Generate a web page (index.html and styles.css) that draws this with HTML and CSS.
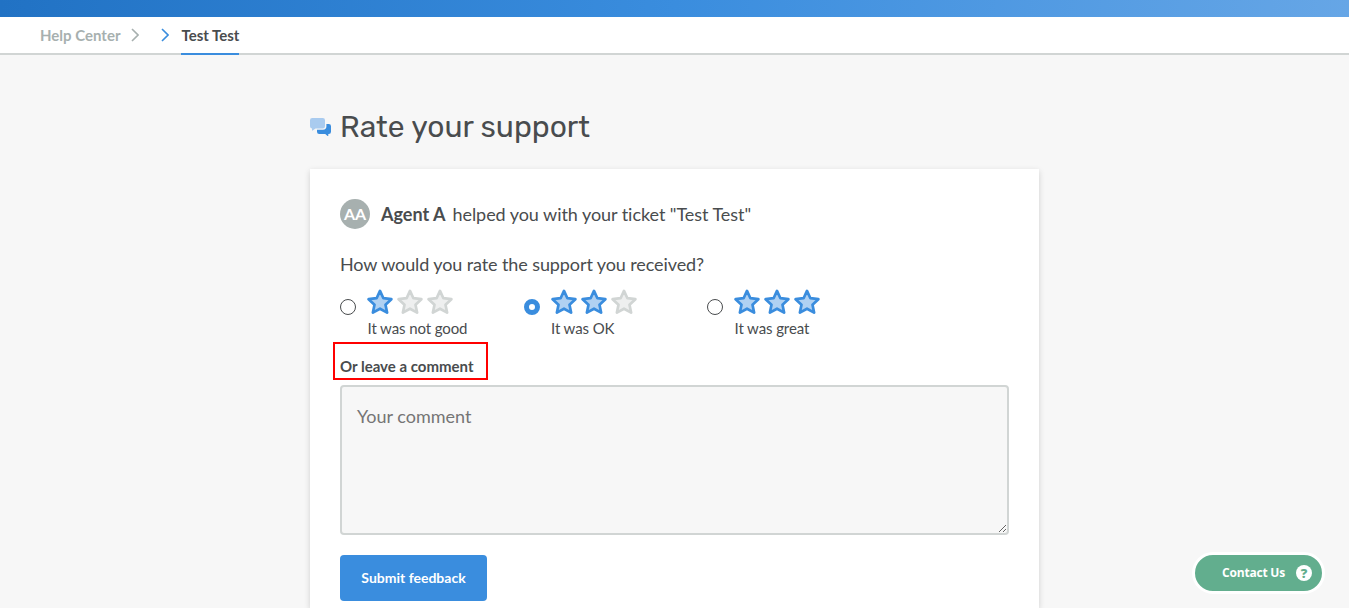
FILE: index.html
```html
<!DOCTYPE html>
<html lang="en">
<head>
<meta charset="utf-8">
<title>Rate your support</title>
<link rel="stylesheet" href="styles.css">
</head>
<body>
<svg class="defs" width="0" height="0" aria-hidden="true">
  <symbol id="star" viewBox="0 0 26 26">
    <path d="M13 1.900l3.400 7.300 8 1-5.900 5.500 1.600 7.900-7.100-3.900-7.100 3.900 1.600-7.900-5.900-5.500 8-1z" stroke-width="2.700" stroke-linejoin="round"/>
  </symbol>
</svg>
<header class="banner"></header>
<nav class="crumbs">
  <a class="crumb">Help Center</a>
  <svg class="chevron" viewBox="0 0 8 14"><path d="M1 1l6 6-6 6"/></svg>
  <svg class="chevron chevron-active" viewBox="0 0 8 14"><path d="M1 1l6 6-6 6"/></svg>
  <a class="crumb crumb-active">Test Test</a>
</nav>
<main class="page">
  <div class="title">
    <svg class="title-icon" viewBox="0 0 21 18">
      <path fill="#a9cbef" d="M2.200 0h10.600q2.200 0 2.200 2.200v6q0 2.200-2.200 2.200H5.500L2.700 12.500q-.7.400-.7-.4v-1.700Q0 10.300 0 8.200v-6Q0 0 2.200 0z"/>
      <path fill="#3a8dde" d="M16.400 6h2.400Q21 6 21 8.200v5.600q0 2.200-2.200 2.200h-.5v1.600q0 .7-.7.300L15.200 16H9.200Q7 16 7 13.800V11.700h6q3.400 0 3.400-3.400z"/>
    </svg>
    <h1>Rate your support</h1>
  </div>
  <section class="card">
    <div class="agent">
      <span class="avatar">AA</span>
      <strong>Agent A</strong>
      <span class="helped">helped you with your ticket "Test Test"</span>
    </div>
    <p class="question">How would you rate the support you received?</p>
    <div class="ratings">
      <label class="rating">
        <span class="radio"></span>
        <span class="choice">
          <span class="stars"><svg class="star on"><use href="#star"/></svg><svg class="star"><use href="#star"/></svg><svg class="star"><use href="#star"/></svg></span>
          <span class="caption">It was not good</span>
        </span>
      </label>
      <label class="rating">
        <span class="radio checked"></span>
        <span class="choice">
          <span class="stars"><svg class="star on"><use href="#star"/></svg><svg class="star on"><use href="#star"/></svg><svg class="star"><use href="#star"/></svg></span>
          <span class="caption">It was OK</span>
        </span>
      </label>
      <label class="rating">
        <span class="radio"></span>
        <span class="choice">
          <span class="stars"><svg class="star on"><use href="#star"/></svg><svg class="star on"><use href="#star"/></svg><svg class="star on"><use href="#star"/></svg></span>
          <span class="caption">It was great</span>
        </span>
      </label>
    </div>
    <div class="comment-label"><label for="comment">Or leave a comment</label></div>
    <textarea id="comment" class="comment" placeholder="Your comment"></textarea>
    <button class="submit">Submit feedback</button>
  </section>
</main>
<a class="contact"><span>Contact Us</span><span class="help">?</span></a>
</body>
</html>
```
FILE: styles.css
```css
* { box-sizing: border-box; }
body {
  margin: 0;
  height: 608px;
  overflow: hidden;
  background: #f7f7f7;
  color: #494c4e;
  font-family: Lato, "Liberation Sans", sans-serif;
}
.defs { position: absolute; }
.banner {
  height: 17px;
  background: linear-gradient(90deg, #2172c4 0%, #3a8dde 50%, #66a6e6 100%);
}
.crumbs {
  display: flex;
  height: 38px;
  padding-left: 40px;
  background: #fff;
  border-bottom: 2px solid #d1d5d4;
}
.crumb {
  height: 38px;
  color: #a7b0af;
  font-size: 15px;
  font-weight: 700;
  line-height: 37px;
  white-space: nowrap;
}
.chevron {
  width: 8px;
  height: 14px;
  margin: 11px 0 0 11px;
  fill: none;
  stroke: #a7b0af;
  stroke-width: 1.6;
}
.chevron-active { margin: 11px 12px 0 22px; stroke: #3a8dde; }
.crumb-active { color: #494c4e; border-bottom: 2px solid #3a8dde; }
.page { width: 729px; margin: 0 auto; }
.title { display: flex; height: 114px; padding-top: 52px; }
.title-icon { width: 21px; height: 18px; margin: 11px 9px 0 0; }
h1 {
  margin: 0;
  font: 400 30px/40px Rubik, Roboto, sans-serif;
}
.card {
  height: 439px;
  padding: 30px 30px 0;
  background: #fff;
  box-shadow: 0 2px 6px rgba(0, 0, 0, .16);
}
.agent { display: flex; height: 30px; font-size: 18px; line-height: 31px; }
.avatar {
  width: 30px;
  height: 30px;
  margin-right: 11px;
  border-radius: 50%;
  background: #a7b0af;
  color: #fff;
  font-size: 16px;
  font-weight: 700;
  line-height: 30px;
  text-align: center;
}
.helped { margin-left: 7px; letter-spacing: -.05px; }
.question { margin: 22px 0 0; font-size: 18px; line-height: 26px; letter-spacing: -.1px; }
.ratings { display: flex; height: 63px; padding-top: 12px; }
.rating { display: flex; width: 183.5px; }
.radio {
  width: 16px;
  height: 16px;
  margin: 10px 11.5px 0 0;
  border: 1px solid #494c4e;
  border-radius: 50%;
  background: #fff;
}
.radio.checked { border: 5px solid #3a8dde; }
.stars { display: flex; gap: 4px; height: 29px; margin-left: -.2px; }
.star { width: 26px; height: 26px; fill: #eeefef; stroke: #d1d5d4; }
.star.on { fill: #b0d1f2; stroke: #3a8dde; }
.caption { display: block; font-size: 15px; line-height: 20px; letter-spacing: -.1px; }
.comment-label {
  width: 155px;
  height: 38px;
  margin: 2px 0 5px -7px;
  padding: 13px 0 0 5px;
  border: 2px solid #f00;
  font-size: 15px;
  font-weight: 700;
  line-height: 18px;
}
.comment {
  display: block;
  width: 669px;
  height: 150px;
  margin: 0;
  padding: 16px 15px;
  border: 2px solid #d1d5d4;
  border-radius: 4px;
  background: #f7f7f7;
  font: 18px/27px Lato, sans-serif;
}
.comment::placeholder { color: #757575; }
.submit {
  display: block;
  width: 147px;
  height: 46px;
  margin-top: 20px;
  padding: 0;
  border: 0;
  border-radius: 4px;
  background: #3a8dde;
  color: #fff;
  font: 700 14px/46px Lato, sans-serif;
}
.contact {
  position: fixed;
  right: 24px;
  bottom: 14px;
  display: flex;
  align-items: center;
  justify-content: flex-end;
  gap: 11px;
  width: 133px;
  height: 42px;
  padding-right: 10px;
  border: 3px solid #fff;
  border-radius: 21px;
  background: #62ae8e;
  color: #fff;
  font: 700 12px/16px "Open Sans", sans-serif;
  letter-spacing: -.2px;
}
.help {
  width: 16px;
  height: 16px;
  border-radius: 50%;
  background: #fff;
  color: #62ae8e;
  font-size: 13px;
  font-weight: 800;
  text-align: center;
}
```
